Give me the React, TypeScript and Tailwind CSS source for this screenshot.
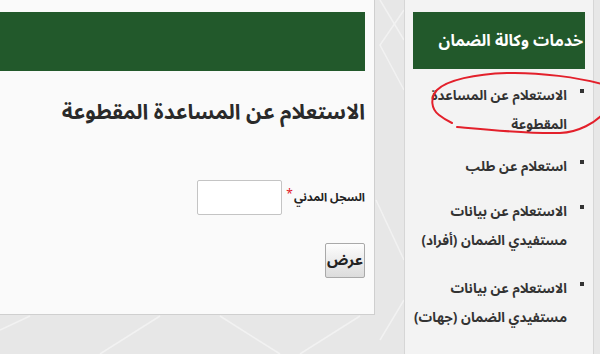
import React from 'react';

const font = { fontFamily: '"Noto Sans Arabic", "DejaVu Sans", sans-serif' };

const items: { lines: string[]; gap: string }[] = [
  { lines: ['الاستعلام عن المساعدة', 'المقطوعة'], gap: 'mb-[13px]' },
  { lines: ['استعلام عن طلب'], gap: 'mb-[16px]' },
  { lines: ['الاستعلام عن بيانات', 'مستفيدي الضمان (أفراد)'], gap: 'mb-[19px]' },
  { lines: ['الاستعلام عن بيانات', 'مستفيدي الضمان (جهات)'], gap: 'mb-[16px]' },
];

const App: React.FC = () => {
  return (
    <div
      dir="rtl"
      className="relative w-[600px] h-[354px] overflow-hidden bg-[#e7e7e7] flex items-start gap-[29px] pr-[6px]"
      style={font}
    >
      {/* background pattern */}
      <svg className="absolute inset-0 z-0" width="600" height="354" viewBox="0 0 600 354">
        <g stroke="#f2f2f2" strokeWidth="1.5" fill="none">
          <path d="M404 10 L380 45 L404 90" />
          <path d="M380 0 L404 40" />
          <path d="M376 200 L404 260" />
          <path d="M404 300 L380 340" />
          <path d="M100 354 L160 316" />
          <path d="M220 316 L280 354" />
          <path d="M300 354 L360 316" />
          <path d="M0 330 L30 316" />
        </g>
      </svg>

      {/* sidebar */}
      <div className="relative z-10 w-[190px] h-[354px] shrink-0 bg-[#f3f3f3] border-x border-[#d6d6d6] pt-[12px] px-[8px]">
        <div className="h-[57px] bg-[#22592b] flex items-center pr-[2px]">
          <span className="text-white font-bold text-[16px]">خدمات وكالة الضمان</span>
        </div>
        <ul className="mt-[12px]">
          {items.map((item, i) => (
            <li key={i} className={`flex items-start ${item.gap}`}>
              <span className="w-[4px] h-[4px] bg-[#333] mt-[8px] mr-[1px] ml-[13px] shrink-0" />
              <div className="text-[13.5px] font-bold text-[#333] leading-[29px]">
                {item.lines.map((l, j) => (
                  <div key={j}>{l}</div>
                ))}
              </div>
            </li>
          ))}
        </ul>
      </div>

      {/* main panel */}
      <div className="relative z-10 w-[375px] h-[315px] shrink-0 bg-[#fafafa] border-r border-b border-[#cfcfcf] pt-[12px] pr-[9px]">
        <div className="h-[59px] bg-[#22592b]" />
        <h2 className="mt-[21px] text-[21px] font-bold text-[#2a2a2a] leading-[40px]">
          الاستعلام عن المساعدة المقطوعة
        </h2>
        <div className="mt-[48px] flex items-center">
          <label className="text-[11.5px] font-bold text-[#222]">السجل المدني</label>
          <span className="text-[#e0202a] text-[12px] mr-[1px] -mt-[6px]">*</span>
          <input
            type="text"
            className="mr-[4px] w-[85px] h-[35px] bg-white border border-[#c4c4c4] rounded-[2px]"
          />
        </div>
        <button className="mt-[28px] w-[40px] h-[35px] border border-[#a9a9a9] rounded-[2px] bg-gradient-to-b from-[#fdfdfd] to-[#dcdcdc] text-[15px] font-bold text-[#222] leading-none">
          عرض
        </button>
      </div>

      {/* hand-drawn red circle */}
      <svg className="absolute inset-0 z-20 pointer-events-none" width="600" height="354" viewBox="0 0 600 354">
        <g stroke="#e3202b" strokeWidth="2" fill="none" strokeLinecap="round">
          <path d="M602 84 C 580 78, 540 72, 507 73 C 475 74, 447 80, 437 90 C 430 98, 431 109, 439 115 C 444 119, 448 121, 452 123" />
          <path d="M457 127 C 490 130, 530 134, 560 133 C 580 132, 595 122, 602 115" />
        </g>
      </svg>
    </div>
  );
};

export default App;
